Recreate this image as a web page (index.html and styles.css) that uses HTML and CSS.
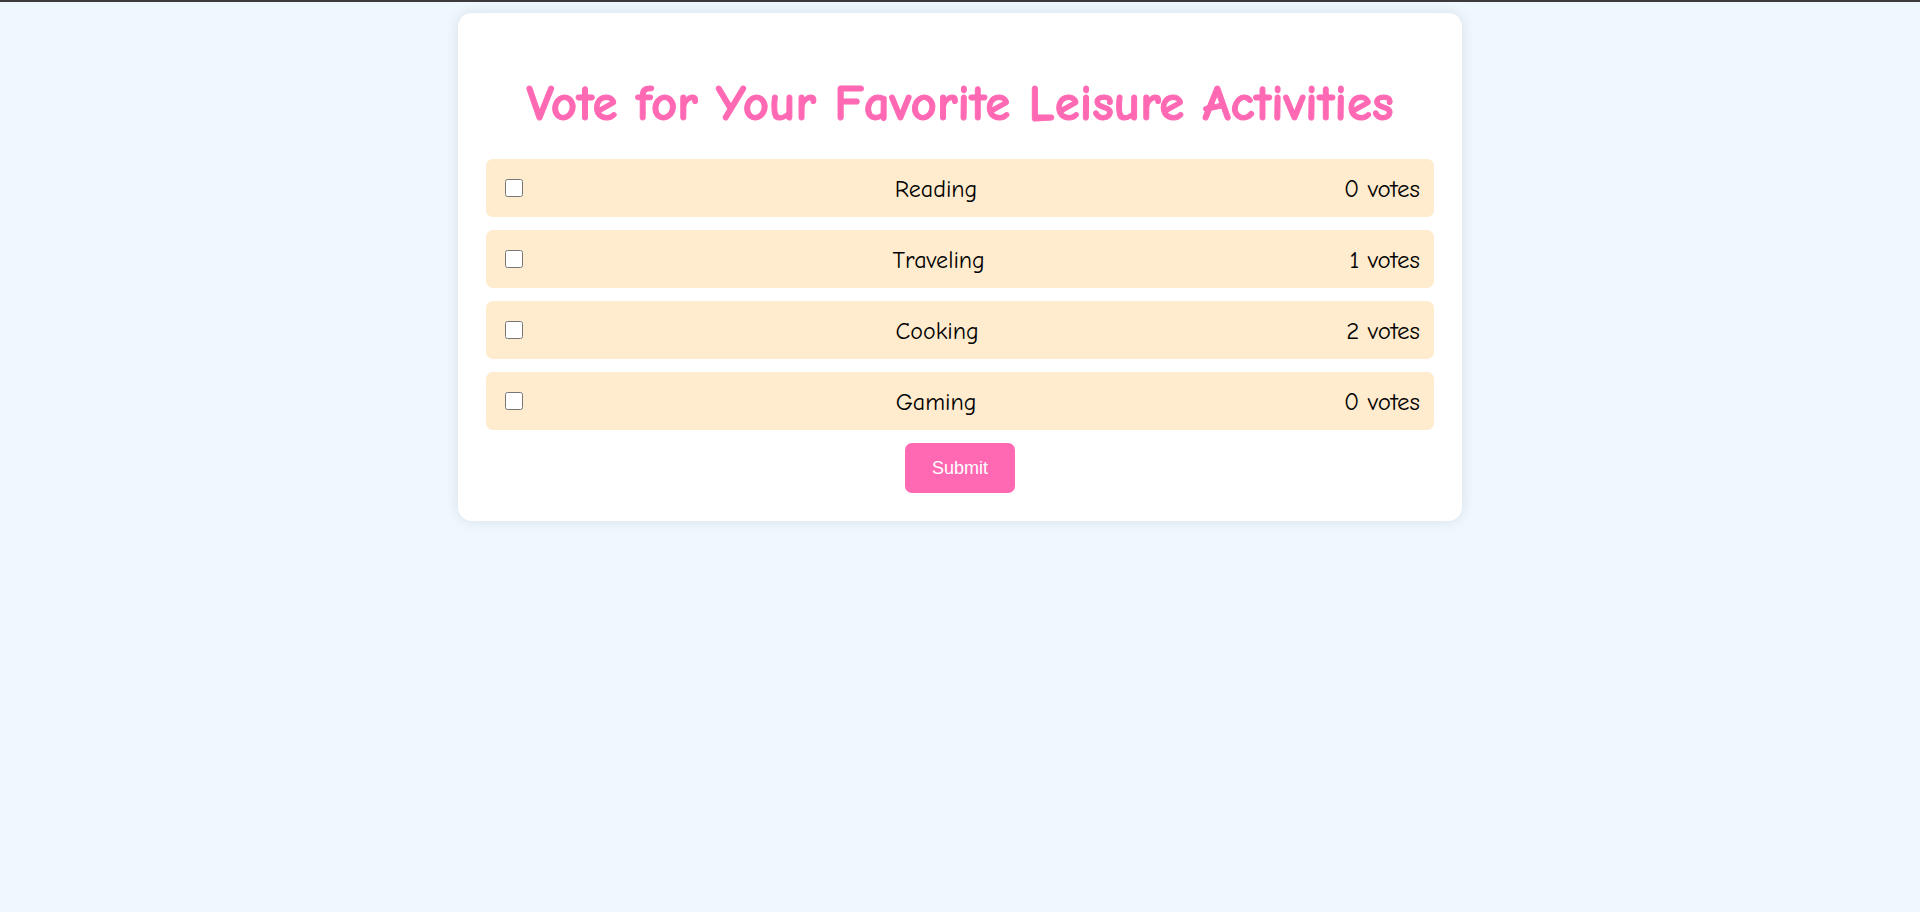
FILE: index.html
```html
<!DOCTYPE html>
<html lang="en">
<head>
<meta charset="utf-8">
<meta name="viewport" content="width=device-width, initial-scale=1">
<title>Vote for Your Favorite Leisure Activities</title>
<link rel="stylesheet" href="styles.css">
</head>
<body>
<main class="container">
  <h1 class="title">Vote for Your Favorite Leisure Activities</h1>
  <form class="poll">
    <div class="option">
      <input class="check" type="checkbox" id="reading" name="activity" value="reading">
      <label class="name" for="reading">Reading</label>
      <span class="votes">0 votes</span>
    </div>
    <div class="option">
      <input class="check" type="checkbox" id="traveling" name="activity" value="traveling">
      <label class="name" for="traveling">Traveling</label>
      <span class="votes">1 votes</span>
    </div>
    <div class="option">
      <input class="check" type="checkbox" id="cooking" name="activity" value="cooking">
      <label class="name" for="cooking">Cooking</label>
      <span class="votes">2 votes</span>
    </div>
    <div class="option">
      <input class="check" type="checkbox" id="gaming" name="activity" value="gaming">
      <label class="name" for="gaming">Gaming</label>
      <span class="votes">0 votes</span>
    </div>
    <button class="submit" type="button">Submit</button>
  </form>
</main>
</body>
</html>
```
FILE: styles.css
```css
* {
  box-sizing: border-box;
}

body {
  margin: 0;
  padding: 11px;
  min-height: 100vh;
  border-top: 2px solid #40393b;
  background: #f0f8ff;
  color: #000;
  font-family: "Comic Sans MS", "Comic Neue", "Noto Sans", sans-serif;
  font-size: 24px;
  font-weight: 400;
  line-height: 28px;
}

.container {
  max-width: 1004px;
  margin: 0 auto;
  padding: 28px;
  border-radius: 14px;
  background: #fff;
  box-shadow: 0 0 14px rgba(0, 0, 0, 0.1);
}

.title {
  margin: 32px 0 24px;
  color: #ff69b4;
  font-size: 51px;
  font-weight: 700;
  line-height: 62px;
  text-align: center;
  -webkit-text-stroke: 1px #ff69b4;
}

.poll {
  display: flex;
  flex-direction: column;
  gap: 13px;
}

.option {
  display: flex;
  align-items: center;
  justify-content: space-between;
  padding: 14px;
  border-radius: 7px;
  background: #ffebcd;
}

.check {
  width: 18px;
  height: 18px;
  margin: 4px 5px;
}

.name,
.votes {
  padding-top: 2px;
}

.votes {
  font-size: 25px;
}

.submit {
  align-self: center;
  padding: 14px 27px;
  border: 0;
  border-radius: 7px;
  background: #ff69b4;
  color: #fff;
  font-family: "Liberation Sans", Arial, sans-serif;
  font-size: 18px;
  line-height: 22px;
  cursor: pointer;
}
```
